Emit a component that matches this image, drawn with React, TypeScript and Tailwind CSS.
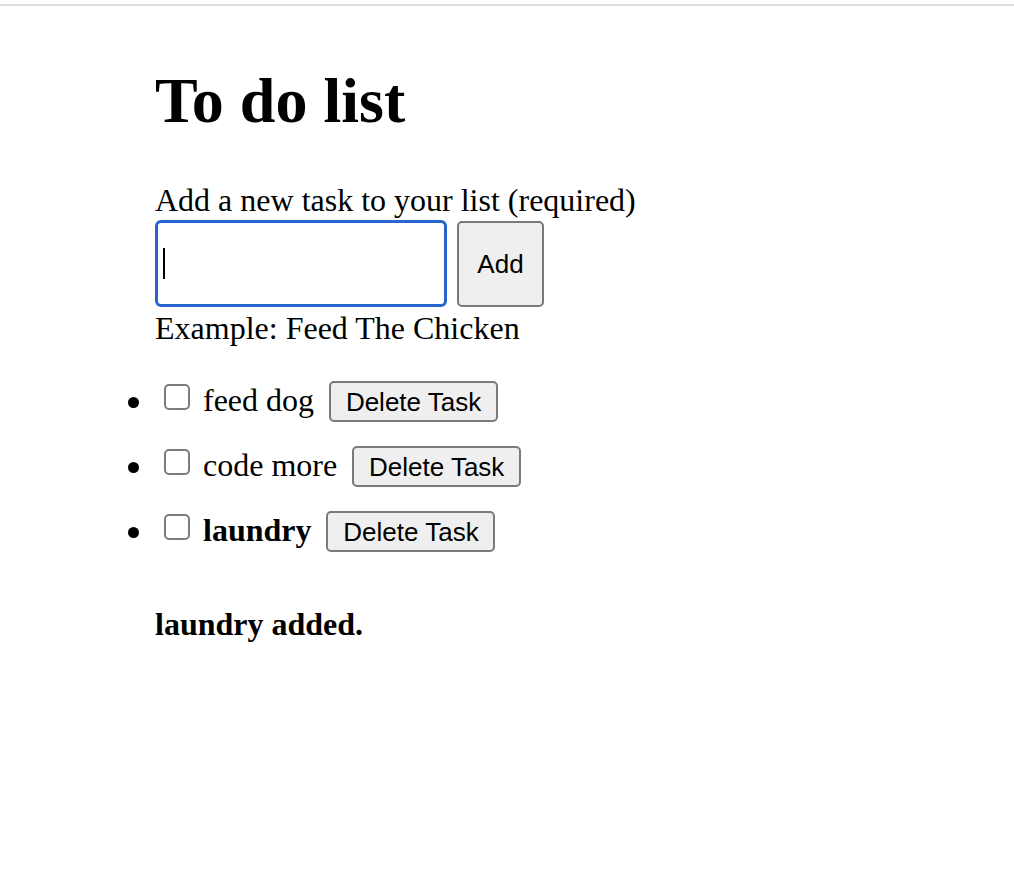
import React from "react";

const tasks = [
  { name: "feed dog", bold: false },
  { name: "code more", bold: false },
  { name: "laundry", bold: true },
];

export default function App() {
  return (
    <div className="min-h-screen bg-white text-black font-['Liberation_Serif',serif]">
      <div className="pt-[4px]">
        <div className="h-[2px] bg-[#dedede]" />
      </div>
      <div className="pl-[155px] flex flex-col items-start">
        <h1 className="mt-[63px] text-[64px] leading-[64px] font-bold">To do list</h1>
        <label className="mt-[51px] text-[32px] leading-[32px]">
          Add a new task to your list (required)
        </label>
        <div className="mt-[4px] flex items-start gap-[10px]">
          <div className="w-[292px] h-[87px] border-[3px] border-[#2764cf] rounded-[6px] bg-white flex items-center pl-[5px]">
            <span className="w-[2px] h-[31px] bg-black" />
          </div>
          <button className="mt-[1px] w-[87px] h-[86px] border-2 border-[#7a7a7a] rounded-[5px] bg-[#efefef] font-['Liberation_Sans',sans-serif] text-[26px] text-black">
            Add
          </button>
        </div>
        <p className="mt-[5px] text-[32px] leading-[32px]">Example: Feed The Chicken</p>
        <ul className="mt-[37px] -ml-[27px] flex flex-col gap-[24px]">
          {tasks.map((t) => (
            <li key={t.name} className="flex items-start h-[41px]">
              <span className="mt-[16px] w-[11px] h-[11px] rounded-full bg-black" />
              <span className="ml-[25px] mt-[3px] w-[26px] h-[26px] border-2 border-[#7d7d7d] rounded-[5px] bg-white" />
              <span
                className={`ml-[13px] mt-[3px] text-[32px] leading-[32px] ${t.bold ? "font-bold" : "font-normal"}`}
              >
                {t.name}
              </span>
              <button className="ml-[15px] w-[169px] h-[41px] border-2 border-[#7a7a7a] rounded-[5px] bg-[#efefef] font-['Liberation_Sans',sans-serif] text-[26px] leading-[30px] text-black">
                Delete Task
              </button>
            </li>
          ))}
        </ul>
        <p className="mt-[56px] text-[32px] leading-[32px] font-bold">laundry added.</p>
      </div>
    </div>
  );
}
